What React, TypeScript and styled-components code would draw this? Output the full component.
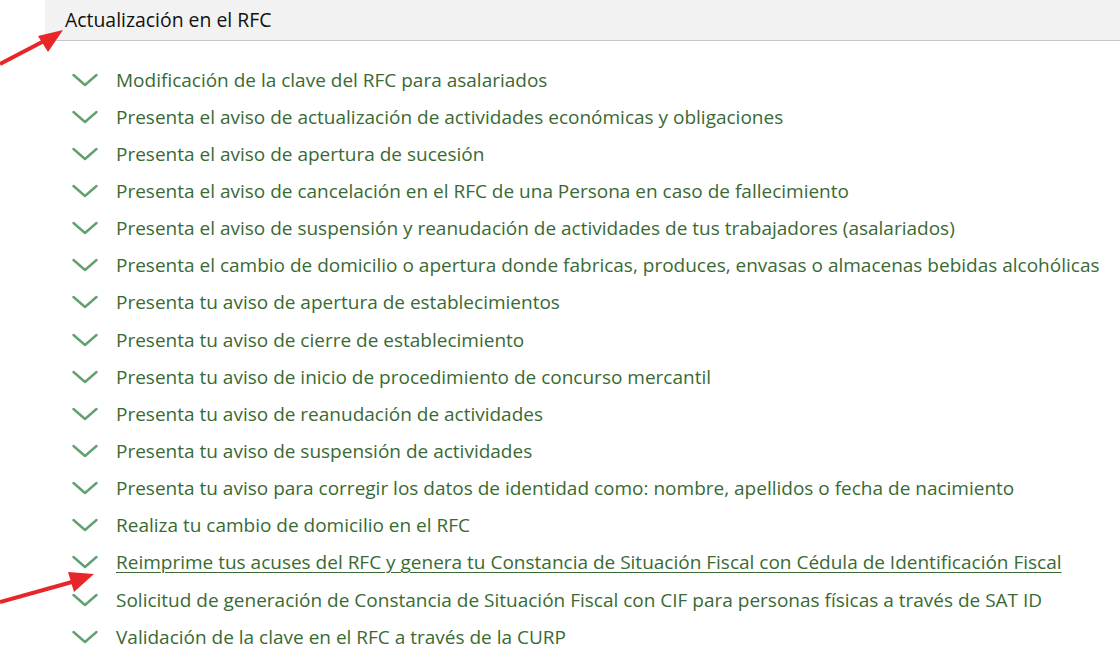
import styled, { createGlobalStyle } from "styled-components";

const GlobalStyle = createGlobalStyle`
  html, body {
    margin: 0;
    padding: 0;
    background: #fff;
    font-family: "Open Sans", "Noto Sans", sans-serif;
  }
`;

const items: { label: string; active?: boolean }[] = [
  { label: "Modificación de la clave del RFC para asalariados" },
  { label: "Presenta el aviso de actualización de actividades económicas y obligaciones" },
  { label: "Presenta el aviso de apertura de sucesión" },
  { label: "Presenta el aviso de cancelación en el RFC de una Persona en caso de fallecimiento" },
  { label: "Presenta el aviso de suspensión y reanudación de actividades de tus trabajadores (asalariados)" },
  {
    label:
      "Presenta el cambio de domicilio o apertura donde fabricas, produces, envasas o almacenas bebidas alcohólicas",
  },
  { label: "Presenta tu aviso de apertura de establecimientos" },
  { label: "Presenta tu aviso de cierre de establecimiento" },
  { label: "Presenta tu aviso de inicio de procedimiento de concurso mercantil" },
  { label: "Presenta tu aviso de reanudación de actividades" },
  { label: "Presenta tu aviso de suspensión de actividades" },
  { label: "Presenta tu aviso para corregir los datos de identidad como: nombre, apellidos o fecha de nacimiento" },
  { label: "Realiza tu cambio de domicilio en el RFC" },
  {
    label:
      "Reimprime tus acuses del RFC y genera tu Constancia de Situación Fiscal con Cédula de Identificación Fiscal",
    active: true,
  },
  { label: "Solicitud de generación de Constancia de Situación Fiscal con CIF para personas físicas a través de SAT ID" },
  { label: "Validación de la clave en el RFC a través de la CURP" },
];

export default function App() {
  return (
    <>
      <GlobalStyle />
      <Page>
        <Header>
          <HeaderTitle>Actualización en el RFC</HeaderTitle>
        </Header>
        <List>
          {items.map((item) => (
            <Row key={item.label}>
              <Chevron viewBox="0 0 26 14">
                <path d="M1.5 2 L13 12 L24.5 2" />
              </Chevron>
              <RowLink $active={item.active}>{item.label}</RowLink>
            </Row>
          ))}
        </List>
        <Arrows viewBox="0 0 1120 661">
          <line x1="0" y1="64" x2="44" y2="41" />
          <polygon points="63,30 38,36 48,52" />
          <line x1="0" y1="602" x2="72" y2="582" />
          <polygon points="94,574 68,572 74,592" />
        </Arrows>
      </Page>
    </>
  );
}

const Page = styled.div`
  position: relative;
  width: 1120px;
  height: 661px;
  overflow: hidden;
`;

const Header = styled.div`
  margin-left: 45px;
  height: 41px;
  box-sizing: border-box;
  background: #f2f2f2;
  border-bottom: 1px solid #c6c6c6;
  display: flex;
  align-items: center;
  padding-left: 20px;
`;

const HeaderTitle = styled.h2`
  margin: 0;
  font-size: 19.4px;
  font-weight: 400;
  color: #111;
  line-height: 1;
`;

const List = styled.ul`
  list-style: none;
  margin: 20px 0 0;
  padding: 0 0 0 72px;
`;

const Row = styled.li`
  display: flex;
  align-items: center;
  gap: 18px;
  height: 37.15px;
`;

const Chevron = styled.svg`
  width: 26px;
  height: 14px;
  flex-shrink: 0;
  fill: none;
  stroke: #62a06f;
  stroke-width: 2.4;
  stroke-linecap: round;
  stroke-linejoin: round;
`;

const RowLink = styled.a<{ $active?: boolean }>`
  font-size: 19px;
  color: #3a6a34;
  white-space: nowrap;
  text-decoration: ${(p) => (p.$active ? "underline" : "none")};
  text-underline-offset: 3px;
  text-decoration-thickness: 1px;
  cursor: pointer;
`;

const Arrows = styled.svg`
  position: absolute;
  inset: 0;
  width: 1120px;
  height: 661px;
  pointer-events: none;

  line {
    stroke: #e8262a;
    stroke-width: 4;
  }
  polygon {
    fill: #e8262a;
  }
`;
